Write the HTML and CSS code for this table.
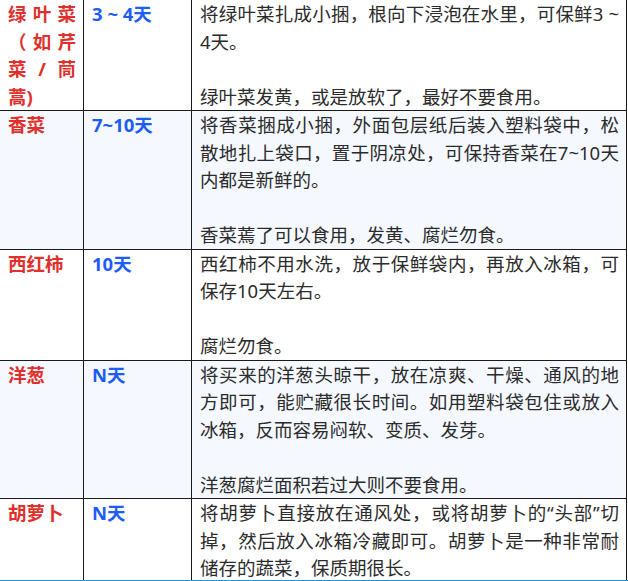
FILE: index.html
```html
<!DOCTYPE html>
<html lang="zh-CN">
<head>
<meta charset="utf-8">
<title>蔬菜保存</title>
<link rel="stylesheet" href="styles.css">
</head>
<body>
<table class="veg">
  <tbody>
    <tr class="row row-first">
      <td class="cell name w-name">绿叶菜（如芹菜/茼蒿)</td>
      <td class="cell days w-days">3 ~ 4天</td>
      <td class="cell desc w-desc">将绿叶菜扎成小捆，根向下浸泡在水里，可保鲜3 ~ 4天。<br><br>绿叶菜发黄，或是放软了，最好不要食用。</td>
    </tr>
    <tr class="row row-alt">
      <td class="cell name">香菜</td>
      <td class="cell days">7~10天</td>
      <td class="cell desc">将香菜捆成小捆，外面包层纸后装入塑料袋中，松散地扎上袋口，置于阴凉处，可保持香菜在7~10天内都是新鲜的。<br><br>香菜蔫了可以食用，发黄、腐烂勿食。</td>
    </tr>
    <tr class="row">
      <td class="cell name">西红柿</td>
      <td class="cell days">10天</td>
      <td class="cell desc">西红柿不用水洗，放于保鲜袋内，再放入冰箱，可保存10天左右。<br><br>腐烂勿食。</td>
    </tr>
    <tr class="row row-alt">
      <td class="cell name">洋葱</td>
      <td class="cell days">N天</td>
      <td class="cell desc">将买来的洋葱头晾干，放在凉爽、干燥、通风的地方即可，能贮藏很长时间。如用塑料袋包住或放入冰箱，反而容易闷软、变质、发芽。<br><br>洋葱腐烂面积若过大则不要食用。</td>
    </tr>
    <tr class="row">
      <td class="cell name">胡萝卜</td>
      <td class="cell days">N天</td>
      <td class="cell desc">将胡萝卜直接放在通风处，或将胡萝卜的“头部”切掉，然后放入冰箱冷藏即可。胡萝卜是一种非常耐储存的蔬菜，保质期很长。</td>
    </tr>
  </tbody>
</table>
<div class="bottom-bar"></div>
</body>
</html>
```

FILE: styles.css
```css
html, body {
  margin: 0;
  padding: 0;
  background: #ffffff;
  overflow: hidden;
}

body {
  font-family: "Noto Sans", "Noto Sans CJK SC", sans-serif;
  font-size: 18.5px;
  line-height: 27.5px;
  color: #2b2b2b;
}

.veg {
  border-collapse: separate;
  border-spacing: 0;
  table-layout: fixed;
  width: 628px;
  margin: -1px 0 0 -1px;
}

.row {
  background: #ffffff;
}

.row-alt {
  background: #f5f9ff;
}

.cell {
  box-sizing: border-box;
  vertical-align: top;
  padding: 0 7px 0 8px;
  border-right: 1px solid #1a1a1a;
  border-bottom: 1px solid #1a1a1a;
}

.row-first .cell {
  border-top: 1px solid #1a1a1a;
}

.name {
  border-left: 1px solid #1a1a1a;
  color: #e0302c;
  font-weight: bold;
  text-align: justify;
}

.days {
  color: #1d5cf8;
  font-weight: bold;
}

.desc {
  text-align: justify;
}

.w-name { width: 85px; }
.w-days { width: 108px; }
.w-desc { width: 435px; }

.bottom-bar {
  height: 2px;
  margin-top: -3px;
  background: #1e96e0;
}
```
